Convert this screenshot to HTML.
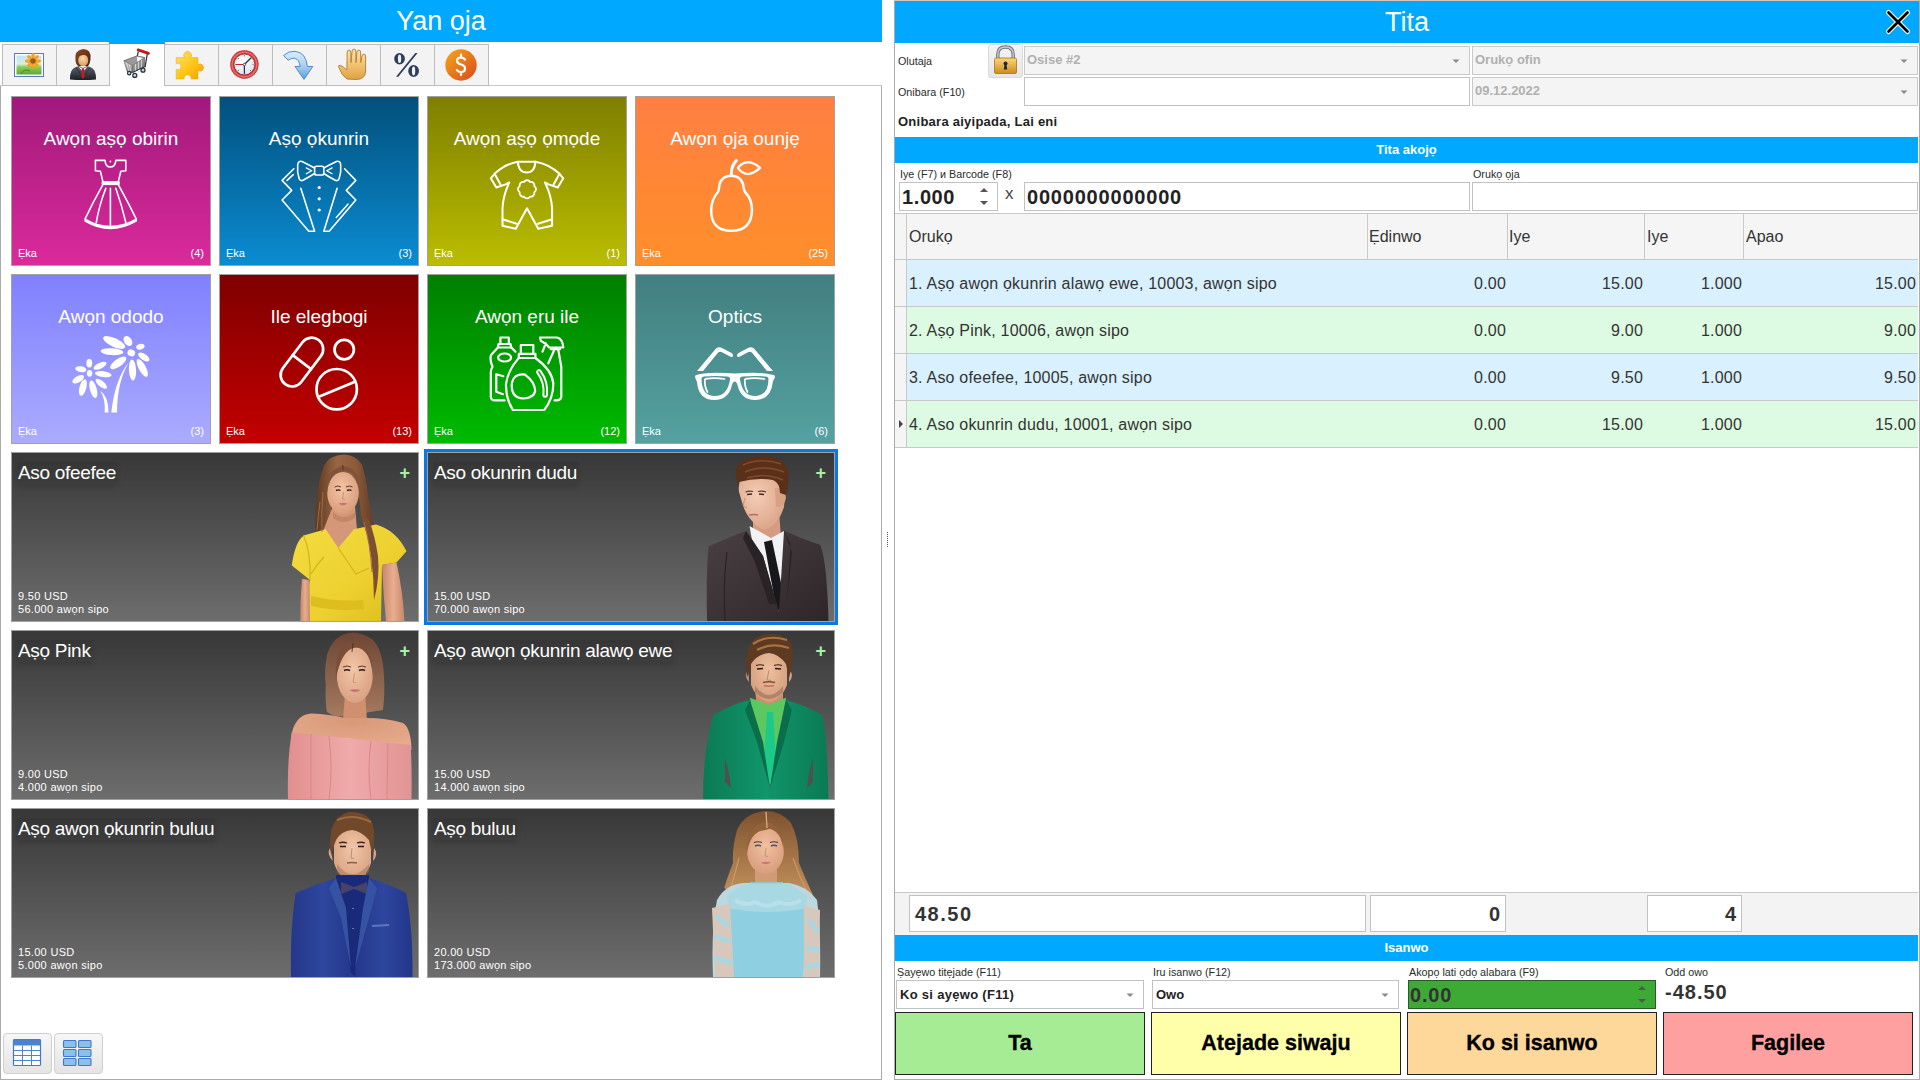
<!DOCTYPE html>
<html><head><meta charset="utf-8">
<style>
*{box-sizing:border-box;margin:0;padding:0}
html,body{width:1920px;height:1080px;overflow:hidden;background:#fff;font-family:"Liberation Sans",sans-serif;position:relative}
.a{position:absolute}
.hdr{background:#00A9FF;color:#fff;font-size:27px;text-align:center}
/* left panel */
#lp{left:0;top:85px;width:882px;height:995px;border:1px solid #ABABAB;border-top:none}
.tab{top:44px;width:55px;height:42px;background:#F3F3F3;border:1px solid #BDBDBD;}
.tab.sel{background:#fff;top:43px;height:43px;border:none}
.cat{width:200px;height:170px;border:1px solid #A2A2A2;color:#fff}
.cat .t{position:absolute;left:0;right:0;top:31px;text-align:center;font-size:19px}
.cat .e{position:absolute;left:6px;bottom:6px;font-size:11px}
.cat .n{position:absolute;right:6px;bottom:6px;font-size:11px}
.cat svg.ic{position:absolute;left:-1px;top:-1px}
.prod{width:408px;height:170px;border:1px solid #A0A0A0;background:linear-gradient(#383838,#6D6D6D);color:#fff;overflow:hidden}
.prod svg.im{position:absolute;left:-1px;top:-1px}
.prod .t{position:absolute;left:5px;top:9px;font-size:19px;letter-spacing:-.3px;background:rgba(0,0,0,.07);box-shadow:0 3px 5px rgba(0,0,0,.12);padding:0 1px}
.prod .p{position:absolute;left:6px;bottom:5px;font-size:11px;line-height:13px;letter-spacing:.3px}
.prod .plus{position:absolute;right:8px;top:10px;color:#A8F0A8;font-size:18px;font-weight:bold}
/* right panel */
#rp{left:894px;top:0;width:1026px;height:1080px;border:1px solid #ABABAB;border-top-color:#D8C6B2}
.lbl{font-size:10.75px;color:#2A2A2A}
.inp{background:#fff;border:1px solid #C2C2C2}
.dis{background:#F4F4F4;border:1px solid #C9C9C9;color:#B0B0B0;font-weight:bold;font-size:13px;padding:5px 0 0 2px}
.bar{background:#00A9FF;color:#fff;font-weight:bold;font-size:13px;text-align:center}
.row{left:895px;width:1023px;height:47px;border-bottom:1px solid #C8C8C8;font-size:16px;color:#333}
.row span{position:absolute;top:15px;letter-spacing:.2px}
.num{text-align:right}
.btn{border:1px solid #222;font-weight:bold;font-size:21.5px;text-align:center;color:#000;-webkit-text-stroke:.35px #000}
</style></head><body>
<!-- LEFT -->
<div class="a hdr" style="left:0;top:0;width:882px;height:42px;line-height:42px">Yan ọja</div>
<div class="a" id="lp"></div>
<div class="a" style="left:0;top:85px;width:882px;height:1px;background:#C8C8C8"></div>
<div class="a tab" style="left:2px"></div>
<div class="a tab" style="left:56px;width:54px"></div>
<div class="a tab sel" style="left:110px;width:54px"></div><div class="a" style="left:109px;top:42px;width:56px;height:2px;background:#00A9FF"></div>
<div class="a tab" style="left:164px"></div>
<div class="a tab" style="left:218px"></div>
<div class="a tab" style="left:272px"></div>
<div class="a tab" style="left:326px"></div>
<div class="a tab" style="left:380px"></div>
<div class="a tab" style="left:434px"></div>

<div class="a cat" style="left:11px;top:96px;background:linear-gradient(#A1197A,#DB2A9C)"><div class="t">Awọn aṣọ obirin</div><svg class="ic" width="200" height="170"><g fill="none" stroke="#fff" stroke-linecap="round" stroke-linejoin="round" stroke-width="1.6">
<path d="M94 64.4 L84.4 64.4 L84.4 74.8 L89.4 75.3 L91.9 85.7 M94 64.4 Q94.5 71 99.4 71 Q104.3 71 104.8 64.4 L114.8 64.4 L114.8 74.8 L109.8 75.3 L107.3 85.7"/>
<path d="M91.9 88.6 Q82 106 74 123.2 Q99 138 125.3 123.2 Q117 106 107.3 88.6"/>
<path d="M74.5 124.8 Q99 139.5 124.8 124.8" stroke-width="2.4"/>
<rect x="91.5" y="85.7" width="16.7" height="2.9" fill="#fff" stroke-width="1"/>
<path d="M99.4 92.3 L99.4 129.8 M94.8 92.3 Q88 110 85.3 126.5 M104.8 92.3 Q111 110 114.8 126.5"/>
<circle cx="99.4" cy="65.5" r=".9" fill="#fff" stroke="none"/>
</g></svg><div class="e">Ẹka</div><div class="n">(4)</div></div>
<div class="a cat" style="left:219px;top:96px;background:linear-gradient(#02507C,#0A8CD2)"><div class="t">Aṣọ ọkunrin</div><svg class="ic" width="200" height="170"><g fill="none" stroke="#fff" stroke-linecap="round" stroke-linejoin="round" stroke-width="1.6">
<path d="M74.8 72.8 L63.1 84.4 L72.7 94.4 L63.1 104 L89.8 135.3 L95.6 135.3 L81.8 92.3"/>
<path d="M125.6 72.8 L136.8 84.4 L127.3 94.4 L136.8 104 L110.2 135.3 L104.8 135.3 L118.1 92.3"/>
<path d="M68.1 84.4 L74.3 78.6 M117.3 121.5 L128.9 108.2"/>
<path d="M95.6 72 Q90 69 83 65.5 Q79 64.5 78.7 69 Q78 76 80 82 Q81 85.5 84 84.3 Q90 81 95.6 77.5"/>
<path d="M104.8 72 Q110 69 117.5 65.5 Q121.5 64.5 121.7 69 Q122.3 76 120.3 82 Q119.3 85.5 116.3 84.3 Q110 81 104.8 77.5"/>
<rect x="95.6" y="70.3" width="9.2" height="8.7" rx="1.8"/>
<path d="M87.3 71.9 L92.7 74.8 L87.3 77.8 M113.1 71.9 L107.7 74.8 L113.1 77.8" stroke-width="1.3"/>
<circle cx="100.2" cy="91.5" r="1.6" fill="#fff" stroke="none"/><circle cx="100.2" cy="102.8" r="1.6" fill="#fff" stroke="none"/><circle cx="100.2" cy="114" r="1.6" fill="#fff" stroke="none"/>
</g></svg><div class="e">Ẹka</div><div class="n">(3)</div></div>
<div class="a cat" style="left:427px;top:96px;background:linear-gradient(#7F7F00,#BABD00)"><div class="t">Awọn aṣọ ọmọde</div><svg class="ic" width="200" height="170"><g fill="none" stroke="#fff" stroke-linecap="round" stroke-linejoin="round" stroke-width="2">
<path d="M90.9 65.7 Q78 68 67.6 77.8 L63.8 82.3 L69.3 91.5 L78 88.6 L82.2 86.5 Q76 100 75.5 112.3 L75.5 129.8 L88.8 132.8 L100 112.3 L111.3 132.8 L125.1 129.8 L125.1 112.3 Q124.5 100 118 86.5 L122.2 88.6 L130.8 91.5 L136.3 82.3 L132.5 77.8 Q122 68 108.4 65.7 Z"/>
<path d="M90.9 65.7 Q91.5 76.5 99.7 76.5 Q107.8 76.5 108.4 65.7"/>
<path d="M67.6 77.8 L73.5 88.5 M132.5 77.8 L126.6 88.5 M75.5 123.2 L89.7 127.8 M125.1 123.2 L110.9 127.8"/>
<path d="M103.02 86.00 A3.5 3.5 0 0 1 107.30 90.28 A3.5 3.5 0 0 1 107.30 96.32 A3.5 3.5 0 0 1 103.02 100.60 A3.5 3.5 0 0 1 96.98 100.60 A3.5 3.5 0 0 1 92.70 96.32 A3.5 3.5 0 0 1 92.70 90.28 A3.5 3.5 0 0 1 96.98 86.00 A3.5 3.5 0 0 1 103.02 86.00 Z" stroke-width="1.8"/>
</g></svg><div class="e">Ẹka</div><div class="n">(1)</div></div>
<div class="a cat" style="left:635px;top:96px;background:linear-gradient(#FF7F42,#FF8E2A)"><div class="t">Awọn ọja ounjẹ</div><svg class="ic" width="200" height="170"><g fill="none" stroke="#fff" stroke-linecap="round" stroke-linejoin="round" stroke-width="2.5">
<path d="M96.3 79.8 Q105 79.8 108 88 Q109 94 110 96 Q117 103 117 114 Q116.5 134.8 96.3 134.8 Q76 134.8 76.2 114 Q76.5 103 83 96 Q84 94 84.5 88 Q87.5 79.8 96.3 79.8 Z"/>
<path d="M96.3 79 Q96 70 101.3 64.6" stroke-width="3"/>
<path d="M102.9 71.9 Q108 65 116 66.5 Q121 68 125 71.9 Q120 77 113 78.2 Q106.5 77.5 102.9 71.9 Z" stroke-width="2.3"/>
</g></svg><div class="e">Ẹka</div><div class="n">(25)</div></div>
<div class="a cat" style="left:11px;top:274px;background:linear-gradient(#8080FF,#ABABFF)"><div class="t">Awọn ododo</div><svg class="ic" width="200" height="170"><g fill="#fff">
<ellipse cx="120.3" cy="78.9" rx="3.9" ry="3.4" transform="rotate(20 120.3 78.9)"/>
<ellipse cx="103.2" cy="68.5" rx="12" ry="4.3" transform="rotate(25 103.2 68.5)"/>
<ellipse cx="116.9" cy="67" rx="5.5" ry="3.8" transform="rotate(55 116.9 67)"/>
<ellipse cx="129.4" cy="72.7" rx="4.3" ry="2.8" transform="rotate(-15 129.4 72.7)"/>
<ellipse cx="101" cy="77.7" rx="11.5" ry="3.4" transform="rotate(3 101 77.7)"/>
<ellipse cx="132.8" cy="83" rx="6.5" ry="3.1" transform="rotate(35 132.8 83)"/>
<ellipse cx="107.3" cy="88.9" rx="9.5" ry="3.8" transform="rotate(-35 107.3 88.9)"/>
<ellipse cx="121.5" cy="96" rx="3.6" ry="10.5" transform="rotate(-3 121.5 96)"/>
<ellipse cx="131.3" cy="93.9" rx="3.6" ry="10" transform="rotate(-28 131.3 93.9)"/>
<path d="M118 88 Q104 105 100.3 138.5 L106 138.5 Q106 108 118 88 Z"/>
<ellipse cx="78.6" cy="99.3" rx="2.7" ry="3.4"/>
<ellipse cx="78.3" cy="89.2" rx="2.9" ry="4.2"/>
<ellipse cx="69.8" cy="95.2" rx="5.6" ry="2.9" transform="rotate(10 69.8 95.2)"/>
<ellipse cx="89" cy="91.8" rx="7" ry="2.9" transform="rotate(-25 89 91.8)"/>
<ellipse cx="92.3" cy="100.2" rx="8.4" ry="2.9" transform="rotate(8 92.3 100.2)"/>
<ellipse cx="67.2" cy="105.2" rx="6.5" ry="3.1" transform="rotate(-30 67.2 105.2)"/>
<ellipse cx="71.9" cy="113.5" rx="3.4" ry="8.5" transform="rotate(15 71.9 113.5)"/>
<ellipse cx="82.3" cy="115.2" rx="3.4" ry="9" transform="rotate(-15 82.3 115.2)"/>
<ellipse cx="90.3" cy="109.8" rx="7" ry="2.9" transform="rotate(40 90.3 109.8)"/>
<path d="M89 116.8 Q94.5 124 93.7 138.5 L97.5 138.5 Q97.5 122 89 116.8 Z"/>
</g></svg><div class="e">Ẹka</div><div class="n">(3)</div></div>
<div class="a cat" style="left:219px;top:274px;background:linear-gradient(#7F0000,#C40000)"><div class="t">Ile elegbogi</div><svg class="ic" width="200" height="170"><g fill="none" stroke="#fff" stroke-linecap="round" stroke-linejoin="round" stroke-width="2.7">
<g transform="translate(82.9 88.1) rotate(-52.8)"><rect x="-27.7" y="-11.5" width="55.4" height="23" rx="11.5"/><path d="M0 -11.5 L0 11.5"/></g>
<circle cx="125.2" cy="75.6" r="9.7"/>
<circle cx="117.7" cy="115.2" r="20.2"/>
<path d="M99.8 122.7 L136 107.7"/>
</g></svg><div class="e">Ẹka</div><div class="n">(13)</div></div>
<div class="a cat" style="left:427px;top:274px;background:linear-gradient(#007F00,#00BA00)"><div class="t">Awọn ẹru ile</div><svg class="ic" width="200" height="170"><g fill="none" stroke="#fff" stroke-linecap="round" stroke-linejoin="round" stroke-width="2.2">
<path d="M73.4 70 L73.4 63.5 L81.8 63.5 L81.8 70 M70.9 73.5 L71.5 70 L83.5 70 L84.3 73.5 Z"/>
<path d="M70.9 73.5 L64 81 Q62.5 86 65.5 92.7 Q63.5 96 63.8 99.3 L63.8 122.7 Q64 126.4 68 126.4 L77.6 126.4 M84.3 73.5 L88.5 77.7"/>
<ellipse cx="77.6" cy="83.5" rx="6.5" ry="4"/>
<path d="M76.3 102.3 L69.3 100.2 L69.3 117.7 L75.9 120.2"/>
<path d="M93.8 79.8 L93.8 71 L106.3 71 L106.3 79.8 M91.8 79.8 L108.4 79.8 L108.4 84 L91.8 84 Z"/>
<path d="M91.8 84 Q81 96 79 110 Q78.5 124 85.9 136 L117.2 136 Q126.5 124 126.3 109.3 Q125 96 108.4 84"/>
<path d="M98 100.6 Q86 99 84.7 111 Q84.5 124 96.3 124.5 Q107 124 108.2 117 Q108 108 98 100.6 Z"/>
<path d="M112 98 Q119.5 108 118.2 121" stroke-width="5.6"/>
<path d="M112 98 Q119.5 108 118.2 121" stroke="#00A400" stroke-width="1.6"/>
<path d="M113 63.5 L130 63.5 Q135.5 64.5 136.3 73.5 L122.2 73.5 Q119 69.5 113.8 66.8 Z M118.8 69.3 L115.5 77.7"/>
<path d="M123.8 75.2 L133 75.2 M127.2 76 L121.3 89.3 M131.3 76 L134.3 92.7 L134.3 122.7 Q134 126.4 129 126.4 L127.6 126.4"/>
</g></svg><div class="e">Ẹka</div><div class="n">(12)</div></div>
<div class="a cat" style="left:635px;top:274px;background:linear-gradient(#427F80,#55A1A1)"><div class="t">Optics</div><svg class="ic" width="200" height="170"><g fill="#fff">
<path d="M62 97 L81 74.5 Q84 72.5 87 74 L96.5 79 Q99 81 97.5 82.8 Q96.5 83.3 95 82.5 L86.5 78 Q84.5 77.2 83 78.8 L68 97 Z"/>
<path d="M138 97 L119 74.5 Q116 72.5 113 74 L103.5 79 Q101 81 102.5 82.8 Q103.5 83.3 105 82.5 L113.5 78 Q115.5 77.2 117 78.8 L132 97 Z"/>
<path fill-rule="evenodd" d="M60.2 101.5 Q70 97.5 99.8 99.5 Q130 97.5 139.8 101.5 L139.8 104 Q138.5 105.5 137.8 108 Q136 126 120 126 Q106 126 102.5 111 Q101.5 107.5 99.8 107.5 Q98 107.5 97 111 Q93.5 126 79.5 126 Q63.5 126 62 108 Q61.2 105.5 60.2 104 Z
M66.5 104.5 Q66.5 122 80 122 Q92.5 122 95 105.5 Q95.5 102.8 92 102.5 Q80 101.5 69 102.5 Q66.5 102.8 66.5 104.5 Z
M133.5 104.5 Q133.5 122 120 122 Q107.5 122 105 105.5 Q104.5 102.8 108 102.5 Q120 101.5 131 102.5 Q133.5 102.8 133.5 104.5 Z"/>
</g><g fill="none" stroke="#fff" stroke-width="1.7" stroke-linecap="round">
<path d="M69.8 105.5 Q69.5 113 72.5 118 M70.5 104.8 Q80 103.3 89.5 105"/>
<path d="M109.8 105.5 Q109.5 113 112.5 118 M110.5 104.8 Q120 103.3 129.5 105"/>
</g></svg><div class="e">Ẹka</div><div class="n">(6)</div></div>
<div class="a prod" style="left:11px;top:452px"><svg class="im" width="408" height="170">
<defs><linearGradient id="yhair" x1="0" y1="0" x2="1" y2="0"><stop offset="0" stop-color="#5E3822"/><stop offset=".35" stop-color="#9A6642"/><stop offset=".65" stop-color="#8A5A3A"/><stop offset="1" stop-color="#5A3620"/></linearGradient>
<linearGradient id="ydr" x1="0" y1="0" x2="1" y2="1"><stop offset="0" stop-color="#F4DC40"/><stop offset=".6" stop-color="#EDD030"/><stop offset="1" stop-color="#D9BA18"/></linearGradient>
<radialGradient id="yface" cx=".45" cy=".4" r=".65"><stop offset="0" stop-color="#F2C4A4"/><stop offset="1" stop-color="#D89A78"/></radialGradient>
<linearGradient id="yarm" x1="0" y1="0" x2="1" y2="0"><stop offset="0" stop-color="#C8876A"/><stop offset=".5" stop-color="#E8AE8E"/><stop offset="1" stop-color="#C8876A"/></linearGradient></defs>
<path d="M333 2.5 Q318 3 313 14 Q307 30 306 47 Q304 62 304.5 78 L320 84 L320 30 L346 30 L350 62 Q356 80 359 100 Q362 125 363.5 146 Q368 128 367 108 Q366 90 363.5 78 Q360 60 357.5 47 Q355 25 351 12.6 Q344 2.5 333 2.5 Z" fill="url(#yhair)"/>
<path d="M322 54 L344 54 L346 78 L327.3 97 L312 79 Z" fill="#D49878"/>
<path d="M322 60 Q332 70 344 60 L344 66 Q332 74 322 66 Z" fill="#B87A5C" opacity=".6"/>
<ellipse cx="332" cy="41" rx="15.8" ry="21" fill="url(#yface)"/>
<path d="M316 42 Q314 17 332 14 Q350 16 349 42 Q347 25 341 21 Q333 17 324 22 Q317 28 316 42 Z" fill="#80523A"/>
<path d="M331.8 13 L332 18" stroke="#4A2A18" stroke-width=".8"/>
<path d="M323.5 35 Q327 33 330 35 M335 35 Q338 33 341.5 35" stroke="#5A3A2A" stroke-width="1" fill="none"/>
<path d="M325 38.5 Q327.5 37.3 329.5 38.5 M336 38.5 Q338.5 37.3 340.5 38.5" stroke="#2A1A14" stroke-width="1.4" fill="none"/>
<path d="M332.5 40 L331.5 47 L334 47.5" stroke="#C08466" stroke-width=".8" fill="none"/>
<path d="M327.5 51.5 Q332 50 336.5 51.5 Q332 55.5 327.5 51.5 Z" fill="#D0707A"/>
<path d="M314.7 77.2 L327.3 96 L343 77.2 L365 72.4 Q385 78 395.5 99.2 L385.5 110.5 L371 113 L370 169 L289.5 169 L299 128 L280.8 113.4 Q284 90 292.6 83.5 Z" fill="url(#ydr)"/>
<path d="M327.3 96 L345 122 L358 116 M300 122 Q306 112 313 105 M292.6 83.5 Q300 100 299 128" stroke="#D4B418" stroke-width="1.2" fill="none"/>
<path d="M298.5 128 L291 127 Q289 150 289.5 169 L299 169 Z" fill="url(#yarm)"/>
<path d="M371 113 L385.5 110.5 Q392 140 393.5 169 L375 169 Q372 140 371 113 Z" fill="url(#yarm)"/>
<path d="M349 62 Q357 82 360 104 Q363 126 363 148 Q369 126 367 104 Q364 84 358 68 Z" fill="#7E4E30"/>
<path d="M353 70 Q359 90 361 120" stroke="#A87048" stroke-width="1" fill="none"/>
<path d="M309 50 Q307 65 306 78 M312 40 Q310 60 311 80" stroke="#A87048" stroke-width=".9" fill="none"/>
<path d="M300 144 Q325 150 352 148 L353 157 Q326 160 300 154 Z" fill="#DDBE1E"/>
</svg><div class="t">Aso ofeefee</div><div class="plus">+</div><div class="p">9.50 USD<br>56.000 awọn sipo</div></div>
<div class="a prod" style="left:427px;top:452px"><svg class="im" width="408" height="170">
<defs><radialGradient id="bface" cx=".4" cy=".4" r=".7"><stop offset="0" stop-color="#F4CDB4"/><stop offset="1" stop-color="#D9A286"/></radialGradient>
<linearGradient id="bsuit" x1="0" y1="0" x2="1" y2="1"><stop offset="0" stop-color="#4A4044"/><stop offset="1" stop-color="#2E2629"/></linearGradient></defs>
<path d="M326 58 L352 58 L354 86 L326 86 Z" fill="#D49C80"/>
<path d="M312 40 Q310 24 322 22 L352 24 Q359 35 357 55 Q352 72 340 77 Q332 78 326 70 Q318 62 315 50 Z" fill="url(#bface)"/>
<path d="M348 36 Q358 34 359 46 Q357 56 349 55 Z" fill="#D8A084"/>
<path d="M311 34 Q305 16 315 9 Q328 3 342 4.5 Q357 7 361 18 Q363 30 359 43 L353 41 Q353 31 346 28 Q330 25 312 30 Z" fill="#5A3018"/>
<path d="M316 13 Q334 5 354 12 M318 20 Q336 12 357 20 M320 26 Q338 20 356 28" stroke="#7E4C2C" stroke-width="1.5" fill="none"/>
<path d="M318.5 40 Q322 38.5 326 39.5 M331 39.5 Q335 38.5 339 40" stroke="#5A3A28" stroke-width="1.1" fill="none"/>
<path d="M320 42.5 L325 42 M332 42 L337 42.5" stroke="#3A2A24" stroke-width="1.3"/>
<path d="M318 46 L316 54 L320 56" stroke="#C48C70" stroke-width=".9" fill="none"/>
<path d="M322 63 Q327 62 331 63" stroke="#B07060" stroke-width="1.3" fill="none"/>
<path d="M322.5 74 L344 86 L357 79 L363.5 92 L360 150 L336 152 Z" fill="#F2F2F4"/>
<path d="M337 90 L345 88 L358 150 L350 160 Z" fill="#18181A"/>
<path d="M281.5 94.5 Q295 88 319.4 78.7 L336 104 L352 160 L357 79 L357.2 78.7 Q375 87 393.4 93 Q400 110 401.5 169 L280 169 Q279 120 281.5 94.5 Z" fill="url(#bsuit)"/>
<path d="M319 79 L336 104 L350 152 L342 152 L328 110 L316 86 Z" fill="#2A2326"/>
<path d="M357 79 L363.5 92 L360 150 L365 100 Z" fill="#2A2326"/>
<path d="M300 100 Q296 130 298 169" stroke="#2A2326" stroke-width="1.2" fill="none"/>
</svg><div class="t">Aso okunrin dudu</div><div class="plus">+</div><div class="p">15.00 USD<br>70.000 awọn sipo</div></div>
<div class="a prod" style="left:11px;top:630px"><svg class="im" width="408" height="170">
<defs><linearGradient id="phair" x1="0" y1="0" x2="0" y2="1"><stop offset="0" stop-color="#6E4634"/><stop offset="1" stop-color="#A47A60"/></linearGradient>
<radialGradient id="pface" cx=".45" cy=".4" r=".7"><stop offset="0" stop-color="#F2C6A8"/><stop offset="1" stop-color="#D69C7C"/></radialGradient>
<radialGradient id="pskin" cx=".5" cy=".2" r=".8"><stop offset="0" stop-color="#D89878"/><stop offset="1" stop-color="#E6AC8C"/></radialGradient>
<linearGradient id="pdr" x1="0" y1="0" x2="1" y2="0"><stop offset="0" stop-color="#E0908E"/><stop offset=".5" stop-color="#F0AAAA"/><stop offset="1" stop-color="#E29494"/></linearGradient></defs>
<path d="M341.4 2.4 Q322 4 316 25 Q313 40 314.7 55 Q314 72 316 82 Q322 86.6 330.4 86.6 L372 80 Q374 62 373 47 Q372 20 362 10 Q352 2.4 341.4 2.4 Z" fill="url(#phair)"/>
<path d="M334 64 L354 64 L356 90 L332 90 Z" fill="#D09070"/>
<path d="M280 108 Q283 85 300 83.5 Q318 84 334 88 L356 88 Q375 88 392 93 Q400 98 400.5 120 Z" fill="url(#pskin)"/>
<ellipse cx="343.8" cy="45" rx="18" ry="28" fill="url(#pface)"/>
<path d="M325 48 Q323 14 343 12 Q362 14 362 48 Q360 25 352 19 Q345 16 340 19 Q330 24 325 48 Z" fill="#7A4E38"/>
<path d="M342 13 L341 22" stroke="#4A2A1A" stroke-width=".8"/>
<path d="M332 37 Q336 35 340 37 M347 37 Q351 35 355 37" stroke="#5A3A2A" stroke-width="1" fill="none"/>
<path d="M333 40.5 Q336 39 339 40.5 M348 40.5 Q351 39 354 40.5" stroke="#2A1A14" stroke-width="1.4" fill="none"/>
<path d="M343.5 43 L342 52 L345 52.5" stroke="#C48A6A" stroke-width=".8" fill="none"/>
<path d="M338.5 60 Q344 58.5 349.5 60 Q344 64 338.5 60 Z" fill="#C8707A"/>
<path d="M280.8 102.4 Q340 108 399.7 115 Q401 140 400.5 169 L277 169 Q276 130 280.8 102.4 Z" fill="url(#pdr)"/>
<path d="M300 104 L300 169 M377 113 L376 169 M318 106 Q322 140 318 169 M360 111 Q356 140 360 169" stroke="#D88888" stroke-width="1" fill="none"/>
</svg><div class="t">Aṣọ Pink</div><div class="plus">+</div><div class="p">9.00 USD<br>4.000 awọn sipo</div></div>
<div class="a prod" style="left:427px;top:630px"><svg class="im" width="408" height="170">
<defs><radialGradient id="gface" cx=".5" cy=".4" r=".7"><stop offset="0" stop-color="#EEC0A0"/><stop offset="1" stop-color="#CF9876"/></radialGradient>
<linearGradient id="gsuit" x1="0" y1="0" x2="1" y2="0"><stop offset="0" stop-color="#0B7A55"/><stop offset=".5" stop-color="#11956A"/><stop offset="1" stop-color="#0A7A54"/></linearGradient></defs>
<path d="M328 58 L356 58 L356 80 L330 80 Z" fill="#C89070"/>
<path d="M324 36 Q322 20 342 18 Q362 20 360 36 L360 55 Q354 70 342 72 Q330 70 324 55 Z" fill="url(#gface)"/>
<path d="M328 56 Q342 74 356 56 L356 62 Q342 76 328 62 Z" fill="#8A6450" opacity=".5"/>
<path d="M321 40 Q316 45 322 52 Z M362 40 Q368 45 362 52 Z" fill="#D4A080"/>
<path d="M320 48 Q315 12 335 5 Q355 1 365 14 Q367 30 362 48 L359 34 Q352 24 342 23 Q330 24 324 34 Z" fill="#5E3A22"/>
<path d="M326 14 Q340 4 360 10 M330 20 Q345 12 362 18" stroke="#A8743E" stroke-width="2.2" fill="none"/>
<path d="M329 35.5 Q333 34 337 35.5 M347 35.5 Q351 34 355 35.5" stroke="#3A2418" stroke-width="1.2" fill="none"/>
<path d="M330 39 L336 38.5 M348 38.5 L354 39" stroke="#2A1A14" stroke-width="1.3"/>
<path d="M342 40 L340 50 L344 50.5" stroke="#B88466" stroke-width=".9" fill="none"/>
<path d="M336 52.5 Q342 51 348 52.5" stroke="#7A5040" stroke-width="1.4" fill="none"/>
<path d="M337 55.5 Q342 57 347 55.5" stroke="#C07060" stroke-width="1.5" fill="none"/>
<path d="M323 67.7 L342 75 L358.8 67.7 L362 92 L352 150 L340 150 L326 92 Z" fill="#5CC860"/>
<path d="M340 82 L346 82 L350 145 L343 155 L336 145 Z" fill="#1EC888"/>
<path d="M286.3 85 Q310 72 323 70 L343 158 L358.8 70 Q380 76 395 85 Q400 100 401.5 169 L276 169 Q276 120 286.3 85 Z" fill="url(#gsuit)"/>
<path d="M323 70 L336 112 L343 158 L330 112 L318 80 Z M358.8 70 L350 112 L343 158 L357 112 L365 80 Z" fill="#0A6E4A"/>
<path d="M298 128 Q302 140 304 158 L298 152 Z M386 128 Q382 140 380 158 L386 152 Z" fill="#505050"/>
</svg><div class="t">Aṣọ awọn ọkunrin alawọ ewe</div><div class="plus">+</div><div class="p">15.00 USD<br>14.000 awọn sipo</div></div>
<div class="a prod" style="left:11px;top:808px"><svg class="im" width="408" height="170">
<defs><radialGradient id="blface" cx=".5" cy=".4" r=".7"><stop offset="0" stop-color="#F2C6A8"/><stop offset="1" stop-color="#D49C7C"/></radialGradient>
<linearGradient id="blsuit" x1="0" y1="0" x2="1" y2="0"><stop offset="0" stop-color="#24388A"/><stop offset=".5" stop-color="#2E469E"/><stop offset="1" stop-color="#22368A"/></linearGradient></defs>
<path d="M330 58 L355 58 L355 80 L330 80 Z" fill="#C89476"/>
<path d="M323 38 Q322 22 341 20 Q361 22 360 38 L360 55 Q355 71 341 73 Q328 71 323 55 Z" fill="url(#blface)"/>
<path d="M326 56 Q341 76 358 56 L358 64 Q341 80 326 64 Z" fill="#9A6E56" opacity=".45"/>
<path d="M319 40 Q315 46 322 53 Z M363 40 Q368 46 362 53 Z" fill="#D8A486"/>
<path d="M320 46 Q315 10 338 4 Q358 3 362 18 Q365 30 361 46 L358 32 Q350 23 341 22 Q330 23 325 32 Z" fill="#72482A"/>
<path d="M326 12 Q342 5 360 14" stroke="#9A6A40" stroke-width="2" fill="none"/>
<path d="M328 35 Q332 33.5 336 35 M346 35 Q350 33.5 354 35" stroke="#3A2418" stroke-width="1.3" fill="none"/>
<path d="M329 38.5 L335 38.5 M347 38.5 L353 38.5" stroke="#2A1A14" stroke-width="1.4"/>
<path d="M341 40 L340 50 L343 50.5" stroke="#B88466" stroke-width=".9" fill="none"/>
<path d="M336 55 Q341 54 346 55" stroke="#8A6050" stroke-width="1.5" fill="none"/>
<path d="M325 67 L358 67 L362 169 L322 169 Z" fill="#1A2A7A"/>
<path d="M330 74 L343 79 L356 74 L356 86 L343 81 L330 86 Z" fill="#4A4266"/>
<path d="M284.7 85 Q305 76 325 70 L340 165 L345 169 L280 169 Q279 120 284.7 85 Z" fill="url(#blsuit)"/>
<path d="M395 85 Q378 76 358 70 L344 165 L345 169 L401.5 169 Q402 120 395 85 Z" fill="url(#blsuit)"/>
<path d="M325 70 L335 100 L340 160 L330 110 L318 80 Z M358 70 L352 100 L344 160 L358 110 L366 80 Z" fill="#3652A2"/>
<path d="M361 118 L378 117" stroke="#5A78C0" stroke-width="2"/>
<path d="M342 100 L342 101 M342 120 L342 121" stroke="#8A90B0" stroke-width="1.5"/>
</svg><div class="t">Aṣọ awọn ọkunrin buluu</div><div class="p">15.00 USD<br>5.000 awọn sipo</div></div>
<div class="a prod" style="left:427px;top:808px"><svg class="im" width="408" height="170">
<defs><linearGradient id="lbhair" x1="0" y1="0" x2="0" y2="1"><stop offset="0" stop-color="#7E5230"/><stop offset=".6" stop-color="#A87848"/><stop offset="1" stop-color="#C0905E"/></linearGradient>
<radialGradient id="lbface" cx=".5" cy=".4" r=".7"><stop offset="0" stop-color="#F2C0A0"/><stop offset="1" stop-color="#D49878"/></radialGradient></defs>
<path d="M339 3 Q318 4 310 22 Q305 40 306 55 Q300 70 297.3 80 Q305 86 318 84 L365 84 Q380 88 385.5 86 Q378 70 372 55 Q372 30 364 15 Q354 3 339 3 Z" fill="url(#lbhair)"/>
<path d="M328 58 L350 58 L350 80 L328 80 Z" fill="#D09C78"/>
<ellipse cx="338.5" cy="43" rx="18.5" ry="23" fill="url(#lbface)"/>
<path d="M320 46 Q318 18 339 14 Q356 16 357 46 Q355 26 346 20 Q339 22 333 23 Q322 28 320 46 Z" fill="#946238"/>
<path d="M339 4 L340 20" stroke="#D8B080" stroke-width="1.2"/>
<path d="M312 50 Q308 65 304 80 M366 50 Q372 68 380 84" stroke="#C89A66" stroke-width="1.2" fill="none"/>
<path d="M327 34.5 Q331 33 335 34.5 M343 34.5 Q347 33 351 34.5" stroke="#5A3A24" stroke-width="1.1" fill="none"/>
<path d="M328 38 Q331 36.5 334 38 M344 38 Q347 36.5 350 38" stroke="#3A5A70" stroke-width="1.5" fill="none"/>
<path d="M339 40 L338 48 L341 48.5" stroke="#BC8868" stroke-width=".8" fill="none"/>
<path d="M334 54.5 Q339 53 344 54.5 Q339 58 334 54.5 Z" fill="#C87A78"/>
<path d="M290 92 Q298 77 316 75 L362 75 Q380 78 390 92 Q394 120 393 169 L286 169 Q284 120 290 92 Z" fill="#BCD8DE"/>
<path d="M300 88 L316 76 L362 76 L380 88 L378 105 L303 103 Z" fill="#A8D8E2"/>
<path d="M300 100 Q340 108 380 100 L376 169 L304 169 Z" fill="#8ED0E2"/>
<path d="M285 100 L303 96 L307 169 L288 169 Z M377 98 L393 102 L392 169 L377 169 Z" fill="#D8C8BC"/>
<path d="M289 108 L301 118 M288 128 L303 134 M288 150 L305 155 M380 140 L392 142 M382 112 L391 124 M379 160 L392 156" stroke="#A6D8E4" stroke-width="4.5"/>
<path d="M308 92 Q318 99 328 94 Q340 101 352 94 Q362 99 374 92" stroke="#B8E0EA" stroke-width="4" fill="none"/>
<path d="M323 75 L356 75" stroke="#8ED0E0" stroke-width="1.6"/>
</svg><div class="t">Aṣọ buluu</div><div class="p">20.00 USD<br>173.000 awọn sipo</div></div>
<div class="a" style="left:424px;top:449px;width:414px;height:176px;border:3px solid #0A78E0"></div>

<svg class="a" style="left:2px;top:44px" width="54" height="41">
<defs><linearGradient id="sky" x1="0" y1="0" x2="0" y2="1"><stop offset="0" stop-color="#BFE3F8"/><stop offset=".45" stop-color="#D8EEDC"/><stop offset=".6" stop-color="#8CCB5A"/><stop offset="1" stop-color="#5FA834"/></linearGradient></defs>
<rect x="12.5" y="9.5" width="29" height="23" fill="#fff" stroke="#5B78C4"/>
<rect x="14.5" y="11.5" width="25" height="19" fill="url(#sky)"/>
<g transform="translate(31,17)"><g fill="#F6A21C">
<ellipse cx="0" cy="-5" rx="1.8" ry="3"/><ellipse cx="0" cy="5" rx="1.8" ry="3"/><ellipse cx="-5" cy="0" rx="3" ry="1.8"/><ellipse cx="5" cy="0" rx="3" ry="1.8"/>
<ellipse cx="3.6" cy="3.6" rx="1.7" ry="2.8" transform="rotate(-45 3.6 3.6)"/><ellipse cx="-3.6" cy="-3.6" rx="1.7" ry="2.8" transform="rotate(-45 -3.6 -3.6)"/><ellipse cx="3.6" cy="-3.6" rx="1.7" ry="2.8" transform="rotate(45 3.6 -3.6)"/><ellipse cx="-3.6" cy="3.6" rx="1.7" ry="2.8" transform="rotate(45 -3.6 3.6)"/></g>
<circle r="2.8" fill="#9A5A1A"/></g>
<path d="M19 30 Q22 24 28 27" stroke="#3E8A2A" stroke-width="1" fill="none"/>
</svg>
<svg class="a" style="left:56px;top:44px" width="54" height="41">
<defs><linearGradient id="suit" x1="0" y1="0" x2="0" y2="1"><stop offset="0" stop-color="#5C6470"/><stop offset="1" stop-color="#1C2026"/></linearGradient>
<radialGradient id="face" cx=".45" cy=".35" r=".7"><stop offset="0" stop-color="#FAD8AA"/><stop offset="1" stop-color="#D49A5A"/></radialGradient>
<linearGradient id="hair" x1="0" y1="0" x2="1" y2="1"><stop offset="0" stop-color="#8A4A22"/><stop offset="1" stop-color="#4A2410"/></linearGradient></defs>
<path d="M14 35.5 Q13.5 25 20 23 L23 22 L27 24 L31 22 L34 23 Q40.5 25 40 35.5 Q27 36.5 14 35.5 Z" fill="url(#suit)"/>
<path d="M22.7 23 L27 28 L31.2 23 L27 24.5 Z" fill="#fff"/>
<path d="M25.8 24.3 L28.2 24.3 L28.8 32 L27 35 L25.2 32 Z" fill="#C01E20"/>
<path d="M20 23.5 L25 31 M34 23.5 L29 31" stroke="#2A3038" stroke-width=".8"/>
<path d="M19.5 17 Q18 6 27 5 Q35.5 5 34.5 15 Q34 20 32 22 L22 22 Q20 20.5 19.5 17 Z" fill="url(#hair)"/>
<ellipse cx="27.2" cy="16.3" rx="5" ry="6" fill="url(#face)"/>
<path d="M21.5 13 Q23 8 28 8.5 Q32 9 33.5 13 Q31 10.5 27 11 Q23.5 11.5 21.5 13 Z" fill="url(#hair)"/>
</svg>
<svg class="a" style="left:110px;top:44px" width="54" height="41">
<defs><linearGradient id="cf" x1="0" y1="0" x2="0" y2="1"><stop offset="0" stop-color="#D8D8D8"/><stop offset="1" stop-color="#7C7C7C"/></linearGradient>
<linearGradient id="cs" x1="0" y1="0" x2="1" y2="1"><stop offset="0" stop-color="#B8B8B8"/><stop offset="1" stop-color="#6A6A6A"/></linearGradient></defs>
<path d="M28.3 7.5 L27.3 12 M37.3 9.8 L35 23.3" stroke="#2A2E34" stroke-width="1.2"/>
<path d="M28.1 5.9 L38.5 9.3" stroke="#C41818" stroke-width="2.8" stroke-linecap="round"/>
<path d="M13.9 16.7 L26.9 11.9 L34.6 13.5 L22.8 21.6 Z" fill="#9A9A9A"/>
<path d="M26.9 12.4 L33.6 13.9 L33.2 19.8 L27.2 17.6 Z" fill="#FAFAFA"/>
<path d="M13.9 16.7 L22.8 21.6 L22.8 28.2 L17.1 27.3 Z" fill="url(#cf)" stroke="#505050" stroke-width=".6"/>
<path d="M22.8 21.6 L34.6 13.5 L34.6 22.4 L22.8 28.2 Z" fill="url(#cs)" stroke="#505050" stroke-width=".6"/>
<path d="M16.5 19 L18.8 27 M19.3 20.5 L20.8 27.6 M25.5 20 L25.5 27 M28.5 18 L28.5 25.5 M31.5 16 L31.5 24" stroke="#EDEDED" stroke-width=".7"/>
<path d="M13.9 16.7 L26.9 11.9 L34.6 13.5" stroke="#606060" stroke-width=".8" fill="none"/>
<path d="M17.3 27.5 L22.8 28.4 L34.8 22.6" stroke="#2A2E34" stroke-width="1" fill="none"/>
<circle cx="19.2" cy="29.2" r="1.7" fill="#C8D4E0" stroke="#1E2A38" stroke-width="1.1"/>
<circle cx="24.8" cy="31.4" r="2" fill="#C8D4E0" stroke="#1E2A38" stroke-width="1.2"/>
<circle cx="33" cy="26.2" r="2" fill="#C8D4E0" stroke="#1E2A38" stroke-width="1.2"/>
</svg>
<svg class="a" style="left:164px;top:44px" width="54" height="41">
<defs><linearGradient id="puz" x1="0" y1="0" x2="1" y2="1"><stop offset="0" stop-color="#FFE070"/><stop offset=".5" stop-color="#FFC818"/><stop offset="1" stop-color="#F0A000"/></linearGradient></defs>
<path d="M12.2 13.6 L20.4 13.6 A3.9 3.9 0 1 1 26.8 13.6 L34 13.6 L34 20.6 A3.6 3.6 0 1 1 34 26.6 L34 35 L27 35 A3.5 3.5 0 1 0 20.2 35 L12.2 35 L12.2 25.3 A3.2 3.2 0 1 0 12.2 19.7 Z" fill="url(#puz)" stroke="#E8A810" stroke-width=".5"/>
</svg>
<svg class="a" style="left:218px;top:44px" width="54" height="41">
<defs><radialGradient id="clk" cx=".4" cy=".35" r=".7"><stop offset="0" stop-color="#fff"/><stop offset="1" stop-color="#DCE2EA"/></radialGradient>
<radialGradient id="ring" cx=".5" cy=".5" r=".5"><stop offset=".72" stop-color="#B01818"/><stop offset=".86" stop-color="#F07070"/><stop offset="1" stop-color="#B82020"/></radialGradient></defs>
<circle cx="26.4" cy="20.5" r="14.2" fill="url(#ring)"/>
<circle cx="26.4" cy="20.5" r="10.4" fill="url(#clk)" stroke="#A01818" stroke-width=".6"/>
<path d="M26.4 20.5 L32.9 14 M26.4 20.5 L26.4 29.5" stroke="#2A3550" stroke-width="1.3" stroke-linecap="round"/>
<path d="M26.4 20.5 L17.3 20.5" stroke="#D02020" stroke-width="1"/>
<circle cx="26.4" cy="20.5" r="1.2" fill="#fff" stroke="#2A3550" stroke-width=".8"/>
<g fill="#3A4050"><circle cx="26.4" cy="11.8" r=".55"/><circle cx="35.1" cy="20.5" r=".55"/><circle cx="32.5" cy="26.5" r=".55"/><circle cx="20.3" cy="26.5" r=".55"/><circle cx="20.3" cy="14.5" r=".55"/><circle cx="32.5" cy="14.5" r=".55"/></g>
</svg>
<svg class="a" style="left:272px;top:44px" width="54" height="41">
<defs><linearGradient id="arw" x1="0" y1="0" x2="0" y2="1"><stop offset="0" stop-color="#D8EEFA"/><stop offset=".5" stop-color="#A8D2F0"/><stop offset="1" stop-color="#5A9EE0"/></linearGradient></defs>
<path d="M11.5 11.5 Q16.5 6.8 23 7.3 Q34 8.5 35.4 22.5 L40.8 22.5 L32 35.4 L23 22.5 L28.1 22.5 Q27.5 15.5 22.5 14.3 Q19 13.8 16.3 16.3 Z" fill="url(#arw)" stroke="#4A80C8" stroke-width=".9" stroke-linejoin="round"/>
</svg>
<svg class="a" style="left:326px;top:44px" width="54" height="41">
<defs><linearGradient id="hnd" x1="0" y1="0" x2="0" y2="1"><stop offset="0" stop-color="#FCE6B0"/><stop offset=".55" stop-color="#F0C070"/><stop offset="1" stop-color="#E0A040"/></linearGradient></defs>
<path d="M21 35 Q16 32 12.8 23.5 Q12 21 14.3 21.3 Q16.5 22 20.8 26 L21.2 8 Q21.3 6.2 23 6.2 Q24.7 6.2 24.8 8 L25 18.6 L26.1 7 Q26.3 5.1 28 5.1 Q29.7 5.1 29.8 7 L30 18.6 L30.9 8 Q31.1 6.2 32.8 6.2 Q34.5 6.2 34.6 8 L34.8 18.6 L36 12 Q36.2 10.1 37.8 10.1 Q39.5 10.1 39.6 12 L39.6 27 Q39.5 35.4 30 35.5 Z" fill="url(#hnd)" stroke="#B87830" stroke-width=".9" stroke-linejoin="round"/>
</svg>
<svg class="a" style="left:380px;top:44px" width="54" height="41">
<path fill-rule="evenodd" fill="#2E3D5E" d="M14.2 14.75 A5.35 5.75 0 1 0 24.9 14.75 A5.35 5.75 0 1 0 14.2 14.75 Z M17.9 14.75 A1.65 4.3 0 1 0 21.2 14.75 A1.65 4.3 0 1 0 17.9 14.75 Z
M28.2 27 A5.4 5.9 0 1 0 39 27 A5.4 5.9 0 1 0 28.2 27 Z M31.95 27 A1.65 4.4 0 1 0 35.25 27 A1.65 4.4 0 1 0 31.95 27 Z"/>
<path d="M16 32.8 L18.3 32.8 L37.6 9 L35.3 9 Z" fill="#2E3D5E"/>
</svg>
<svg class="a" style="left:434px;top:44px" width="54" height="41">
<defs><linearGradient id="dol" x1="0" y1="0" x2="1" y2="1"><stop offset="0" stop-color="#F5A81A"/><stop offset="1" stop-color="#D84A1E"/></linearGradient></defs>
<circle cx="27" cy="21" r="15.7" fill="url(#dol)"/>
<path d="M31 15.5 Q29.5 13.5 27 13.5 Q23 13.5 23 16.8 Q23 19.5 27 20.5 Q31 21.5 31 24.5 Q31 28 27 28 Q24 28 22.8 26" fill="none" stroke="#fff" stroke-width="2.2" stroke-linecap="round"/>
<path d="M27 10.5 L27 13.5 M27 28 L27 31" stroke="#fff" stroke-width="2.2" stroke-linecap="round"/>
</svg>

<div class="a" style="left:3px;top:1033px;width:49px;height:41px;border:1px solid #CFCFCF;border-radius:4px;background:linear-gradient(#F7F7F7,#E4E4E4)"></div>
<div class="a" style="left:54px;top:1033px;width:49px;height:41px;border:1px solid #CFCFCF;border-radius:4px;background:linear-gradient(#F7F7F7,#E4E4E4)"></div>
<svg class="a" style="left:0;top:1030px" width="110" height="45">
<rect x="13.5" y="9.5" width="27" height="26" rx="1" fill="#fff" stroke="#3F78C8" stroke-width="1.2"/>
<rect x="13.5" y="9.5" width="27" height="6" fill="#4A84D0"/>
<path d="M14 20.5 H40 M14 25.5 H40 M14 30.5 H40 M22.5 15.5 V35.5 M31.5 15.5 V35.5" stroke="#4A84D0" stroke-width="1"/>
<g fill="#8CC0EA" stroke="#3F78C8" stroke-width="1.1">
<rect x="63.5" y="10.5" width="12.5" height="7" rx="1"/><rect x="78.5" y="10.5" width="12.5" height="7" rx="1"/>
<rect x="63.5" y="19.5" width="12.5" height="7" rx="1"/><rect x="78.5" y="19.5" width="12.5" height="7" rx="1"/>
<rect x="63.5" y="28.5" width="12.5" height="7" rx="1"/><rect x="78.5" y="28.5" width="12.5" height="7" rx="1"/>
</g></svg>
<!-- RIGHT -->
<div class="a" id="rp"></div>
<div class="a hdr" style="left:895px;top:1px;width:1024px;height:42px;line-height:42px">Tita</div>

<!-- close X -->
<svg class="a" style="left:1884px;top:8px" width="28" height="28" viewBox="0 0 28 28"><path d="M4.5 4.5L23.5 23.5M23.5 4.5L4.5 23.5" stroke="#fff" stroke-width="5" stroke-linecap="round"/><path d="M4.5 4.5L23.5 23.5M23.5 4.5L4.5 23.5" stroke="#000" stroke-width="2.8" stroke-linecap="round"/></svg>
<div class="a lbl" style="left:898px;top:55px">Olutaja</div>
<div class="a lbl" style="left:898px;top:86px">Onibara (F10)</div>
<div class="a" style="left:988px;top:44px;width:35px;height:34px;background:linear-gradient(#F4F4F4,#E6E6E6);border:1px solid #DADADA;border-radius:3px"></div>
<svg class="a" style="left:988px;top:44px" width="35" height="34">
<defs><linearGradient id="lk" x1="0" y1="0" x2="0" y2="1"><stop offset="0" stop-color="#F8DA7A"/><stop offset="1" stop-color="#D08A1A"/></linearGradient></defs>
<path d="M9.8 15 L9.8 10.5 Q9.8 3 17.5 3 Q25.2 3 25.2 10.5 L25.2 15" fill="none" stroke="#6E747C" stroke-width="3.4"/><path d="M9.8 15 L9.8 10.5 Q9.8 3 17.5 3 Q25.2 3 25.2 10.5 L25.2 15" fill="none" stroke="#C8CCD2" stroke-width="1.4"/>
<rect x="6.5" y="14" width="22" height="15.5" rx="1.5" fill="url(#lk)" stroke="#B07010" stroke-width=".8"/>
<circle cx="17.5" cy="19.5" r="2" fill="#1E2A3A"/><path d="M16.5 20 L15.8 25.5 L19.2 25.5 L18.5 20Z" fill="#1E2A3A"/>
</svg>
<div class="a dis" style="left:1024px;top:46px;width:446px;height:29px">Osise #2<svg style="position:absolute;right:9px;top:12px" width="8" height="5"><path d="M0.5 0.5L7.5 0.5L4 4Z" fill="#8A8A8A"/></svg></div>
<div class="a dis" style="left:1472px;top:46px;width:446px;height:29px">Orukọ ofin<svg style="position:absolute;right:9px;top:12px" width="8" height="5"><path d="M0.5 0.5L7.5 0.5L4 4Z" fill="#8A8A8A"/></svg></div>
<div class="a inp" style="left:1024px;top:77px;width:446px;height:29px"></div>
<div class="a dis" style="left:1472px;top:77px;width:446px;height:29px">09.12.2022<svg style="position:absolute;right:9px;top:12px" width="8" height="5"><path d="M0.5 0.5L7.5 0.5L4 4Z" fill="#8A8A8A"/></svg></div>
<div class="a" style="left:898px;top:114px;font-size:13px;font-weight:bold;color:#222;letter-spacing:.25px">Onibara aiyipada, Lai eni</div>
<div class="a bar" style="left:895px;top:137px;width:1023px;height:26px;line-height:26px">Tita akojọ</div>
<div class="a lbl" style="left:900px;top:168px">Iye (F7) и Barcode (F8)</div>
<div class="a lbl" style="left:1473px;top:168px">Orukọ ọja</div>
<div class="a inp" style="left:899px;top:182px;width:99px;height:29px;font-size:20px;font-weight:bold;color:#222;padding:3px 0 0 2px;letter-spacing:.6px">1.000<svg style="position:absolute;right:9px;top:4px" width="8" height="20"><path d="M0 5L8 5L4 1Z M0 14L8 14L4 18Z" fill="#555"/></svg></div>
<div class="a" style="left:1005px;top:184px;font-size:17px;color:#444">x</div>
<div class="a inp" style="left:1024px;top:182px;width:446px;height:29px;font-size:20px;font-weight:bold;color:#222;padding:3px 0 0 2px;letter-spacing:.8px">0000000000000</div>
<div class="a inp" style="left:1472px;top:182px;width:446px;height:29px"></div>
<!-- grid header -->
<div class="a" style="left:895px;top:213px;width:1023px;height:47px;background:#F5F5F5;border-top:1px solid #C8C8C8;border-bottom:1px solid #C8C8C8"></div>
<div class="a" style="left:906px;top:213px;width:1px;height:234px;background:#C8C8C8"></div>
<div class="a" style="left:1367px;top:213px;width:1px;height:47px;background:#C8C8C8"></div>
<div class="a" style="left:1507px;top:213px;width:1px;height:47px;background:#C8C8C8"></div>
<div class="a" style="left:1644px;top:213px;width:1px;height:47px;background:#C8C8C8"></div>
<div class="a" style="left:1743px;top:213px;width:1px;height:47px;background:#C8C8C8"></div>
<div class="a" style="left:909px;top:228px;font-size:16px;color:#333">Orukọ</div>
<div class="a" style="left:1369px;top:228px;font-size:16px;color:#333">Ẹdinwo</div>
<div class="a" style="left:1509px;top:228px;font-size:16px;color:#333">Iye</div>
<div class="a" style="left:1647px;top:228px;font-size:16px;color:#333">Iye</div>
<div class="a" style="left:1746px;top:228px;font-size:16px;color:#333">Apao</div>
<div class="a row" style="top:260px;background:#D9F0FE"><div class="a" style="left:0;top:0;width:12px;height:46px;background:#F5F5F5;border-right:1px solid #C8C8C8"></div><span style="left:14px">1. Aṣọ awọn ọkunrin alawọ ewe, 10003, awọn sipo</span><span class="num" style="right:412px">0.00</span><span class="num" style="right:275px">15.00</span><span class="num" style="right:176px">1.000</span><span class="num" style="right:2px">15.00</span></div>
<div class="a row" style="top:307px;background:#DDFBE2"><div class="a" style="left:0;top:0;width:12px;height:46px;background:#F5F5F5;border-right:1px solid #C8C8C8"></div><span style="left:14px">2. Aṣọ Pink, 10006, awọn sipo</span><span class="num" style="right:412px">0.00</span><span class="num" style="right:275px">9.00</span><span class="num" style="right:176px">1.000</span><span class="num" style="right:2px">9.00</span></div>
<div class="a row" style="top:354px;background:#D9F0FE"><div class="a" style="left:0;top:0;width:12px;height:46px;background:#F5F5F5;border-right:1px solid #C8C8C8"></div><span style="left:14px">3. Aso ofeefee, 10005, awọn sipo</span><span class="num" style="right:412px">0.00</span><span class="num" style="right:275px">9.50</span><span class="num" style="right:176px">1.000</span><span class="num" style="right:2px">9.50</span></div>
<div class="a row" style="top:401px;background:#DDFBE2"><div class="a" style="left:0;top:0;width:12px;height:46px;background:#F5F5F5;border-right:1px solid #C8C8C8"></div><span style="left:14px">4. Aso okunrin dudu, 10001, awọn sipo</span><span class="num" style="right:412px">0.00</span><span class="num" style="right:275px">15.00</span><span class="num" style="right:176px">1.000</span><span class="num" style="right:2px">15.00</span></div>
<svg class="a" style="left:898px;top:419px" width="6" height="10"><path d="M1 1L5 5L1 9Z" fill="#444"/></svg>
<!-- footer totals -->
<div class="a" style="left:895px;top:892px;width:1023px;height:43px;background:#F3F3F3;border-top:1px solid #C8C8C8"></div>
<div class="a inp" style="left:909px;top:895px;width:457px;height:37px;font-size:20px;font-weight:bold;color:#333;padding:7px 0 0 5px;letter-spacing:1.5px">48.50</div>
<div class="a inp" style="left:1370px;top:895px;width:136px;height:37px;font-size:20px;font-weight:bold;color:#333;padding:7px 5px 0 0;text-align:right">0</div>
<div class="a inp" style="left:1647px;top:895px;width:95px;height:37px;font-size:20px;font-weight:bold;color:#333;padding:7px 5px 0 0;text-align:right">4</div>
<div class="a bar" style="left:895px;top:935px;width:1023px;height:26px;line-height:26px">Isanwo</div>
<div class="a lbl" style="left:897px;top:966px">Ṣayẹwo titẹjade (F11)</div>
<div class="a lbl" style="left:1153px;top:966px">Iru isanwo (F12)</div>
<div class="a lbl" style="left:1409px;top:966px">Akopọ lati ọdọ alabara (F9)</div>
<div class="a lbl" style="left:1665px;top:966px">Odd owo</div>
<div class="a inp" style="left:896px;top:980px;width:248px;height:29px;font-size:13px;font-weight:bold;color:#222;padding:6px 0 0 3px;letter-spacing:.3px">Ko si ayẹwo (F11)<svg style="position:absolute;right:9px;top:12px" width="8" height="5"><path d="M0.5 0.5L7.5 0.5L4 4Z" fill="#8A8A8A"/></svg></div>
<div class="a inp" style="left:1152px;top:980px;width:247px;height:29px;font-size:13px;font-weight:bold;color:#222;padding:6px 0 0 3px">Owo<svg style="position:absolute;right:9px;top:12px" width="8" height="5"><path d="M0.5 0.5L7.5 0.5L4 4Z" fill="#8A8A8A"/></svg></div>
<div class="a" style="left:1408px;top:980px;width:248px;height:29px;background:#3DAA35;border:1px solid #2A5A2A;font-size:20px;font-weight:bold;color:#333;padding:3px 0 0 1px;letter-spacing:.8px">0.00<svg style="position:absolute;right:9px;top:4px" width="8" height="20"><path d="M0 5L8 5L4 1Z M0 14L8 14L4 18Z" fill="#555"/></svg></div>
<div class="a" style="left:1665px;top:981px;font-size:20px;font-weight:bold;color:#333;letter-spacing:1px">-48.50</div>
<div class="a btn" style="left:895px;top:1012px;width:250px;height:63px;line-height:61px;background:#A6EC94">Ta</div>
<div class="a btn" style="left:1151px;top:1012px;width:250px;height:63px;line-height:61px;background:#FFFFAA">Atejade siwaju</div>
<div class="a btn" style="left:1407px;top:1012px;width:250px;height:63px;line-height:61px;background:#FDD89A">Ko si isanwo</div>
<div class="a btn" style="left:1663px;top:1012px;width:250px;height:63px;line-height:61px;background:#FFA0A0">Fagilee</div>
<!-- splitter grip -->
<div class="a" style="left:887px;top:532px;width:1px;height:15px;background:repeating-linear-gradient(#555 0 1px,transparent 1px 2px)"></div>
</body></html>
